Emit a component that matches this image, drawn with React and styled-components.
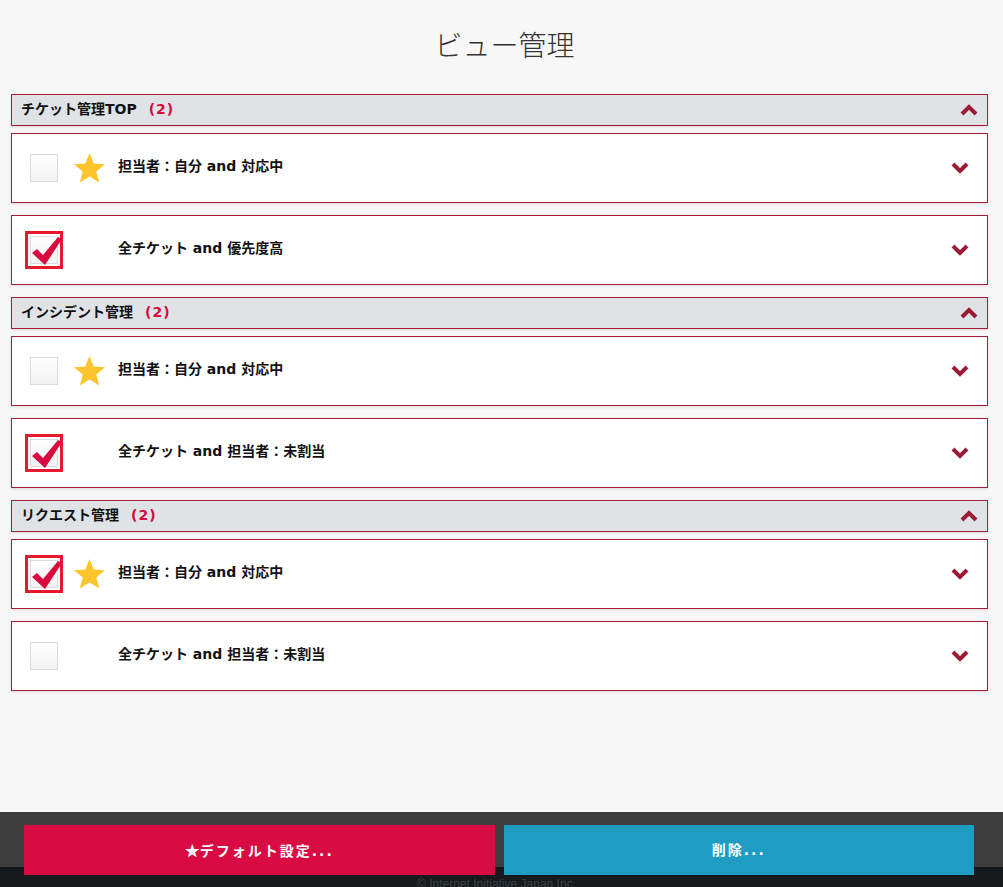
import React from 'react';
import styled, { createGlobalStyle } from 'styled-components';

const groups = [
  {
    title: 'チケット管理TOP',
    items: [
      { label: '担当者：自分 and 対応中', checked: false, star: true },
      { label: '全チケット and 優先度高', checked: true, star: false },
    ],
  },
  {
    title: 'インシデント管理',
    items: [
      { label: '担当者：自分 and 対応中', checked: false, star: true },
      { label: '全チケット and 担当者：未割当', checked: true, star: false },
    ],
  },
  {
    title: 'リクエスト管理',
    items: [
      { label: '担当者：自分 and 対応中', checked: true, star: true },
      { label: '全チケット and 担当者：未割当', checked: false, star: false },
    ],
  },
];

const Chevron = ({ up }) => (
  <svg width="18" height="12" viewBox="0 0 18 12">
    <polyline
      points={up ? '2,10 9,3 16,10' : '2,2 9,9 16,2'}
      fill="none"
      stroke="#9b1b35"
      strokeWidth="4"
      strokeLinejoin="miter"
    />
  </svg>
);

const Star = () => (
  <svg width="33" height="32" viewBox="0 0 33 32">
    <polygon
      points="16.5,1 20.7,11.6 32,12.2 23.3,19.5 26.2,30.6 16.5,24.4 6.8,30.6 9.7,19.5 1,12.2 12.3,11.6"
      fill="#fdc52b"
    />
  </svg>
);

const CheckMark = () => (
  <Tick width="32" height="30" viewBox="0 0 32 30">
    <polygon points="1,16 6,12 12,18 27,0 31,2 14,28" fill="#d9093f" />
  </Tick>
);

const App = () => (
  <>
    <GlobalStyle />
    <Page>
      <Main>
        <Title>ビュー管理</Title>
        {groups.map((group, gi) => (
          <Group key={gi}>
            <GroupHeader>
              <GroupTitle>{group.title}</GroupTitle>
              <Count>(2)</Count>
              <Spacer />
              <Chevron up />
            </GroupHeader>
            <ItemList>
              {group.items.map((item, ii) => (
                <Item key={ii}>
                  <Box checked={item.checked}>{item.checked && <CheckMark />}</Box>
                  <StarSlot>{item.star && <Star />}</StarSlot>
                  <Label>{item.label}</Label>
                  <Spacer />
                  <Chevron />
                </Item>
              ))}
            </ItemList>
          </Group>
        ))}
      </Main>
      <ActionBar>
        <Button color="#d90b43"><StarGlyph>★</StarGlyph>デフォルト設定...</Button>
        <Button color="#1e9cc1">削除...</Button>
      </ActionBar>
      <Copyright>© Internet Initiative Japan Inc.</Copyright>
    </Page>
  </>
);

export default App;

const GlobalStyle = createGlobalStyle`
  body {
    margin: 0;
    background: #f7f7f7;
    font-family: "DejaVu Sans", "Noto Sans CJK JP", sans-serif;
    color: #111;
  }
`;

const Page = styled.div`
  height: 100vh;
  display: flex;
  flex-direction: column;
  overflow: hidden;
`;

const Main = styled.div`
  flex: 1;
  padding: 0 15px 0 11px;
`;

const Title = styled.h1`
  margin: 0 0 30px;
  padding: 24px 0 0 10px;
  height: 40px;
  line-height: 40px;
  text-align: center;
  font-family: "Noto Sans CJK JP", sans-serif;
  font-size: 28px;
  font-weight: 300;
  color: #333;
`;

const Group = styled.div`
  margin-bottom: 12px;
`;

const GroupHeader = styled.div`
  height: 30px;
  display: flex;
  align-items: center;
  padding: 0 9px;
  background: #dfe3e6;
  border: 1px solid #a51d36;
  box-shadow: 0 1px 2px rgba(0, 0, 0, 0.12);
  margin-bottom: 7px;
`;

const GroupTitle = styled.span`
  font-size: 14px;
  line-height: 18px;
  font-weight: 700;
  transform: translateY(-1px);
`;

const Count = styled.span`
  margin-left: 12px;
  font-size: 14px;
  line-height: 18px;
  font-weight: 700;
  color: #d9093f;
  letter-spacing: 1px;
  transform: translateY(-1px);
`;

const Spacer = styled.div`
  flex: 1;
`;

const ItemList = styled.div`
  display: flex;
  flex-direction: column;
  gap: 12px;
`;

const Item = styled.div`
  height: 68px;
  display: flex;
  align-items: center;
  padding: 0 18px;
  background: #fff;
  border: 1px solid #a51d36;
  box-shadow: 0 1px 3px rgba(0, 0, 0, 0.12);
`;

const Box = styled.div`
  position: relative;
  width: 26px;
  height: 26px;
  border: 1px solid #dcdcdc;
  background: linear-gradient(#fff, #f2f2f2);
  outline: ${p => (p.checked ? '3px solid #e8192c' : 'none')};
  outline-offset: 2px;
`;

const Tick = styled.svg`
  position: absolute;
  left: 0;
  top: 0;
`;

const StarSlot = styled.div`
  width: 33px;
  height: 32px;
  margin-left: 15px;
`;

const Label = styled.span`
  margin-left: 12px;
  font-size: 14px;
  line-height: 18px;
  font-weight: 700;
  transform: translateY(-2px);
`;

const ActionBar = styled.div`
  position: relative;
  z-index: 1;
  height: 42px;
  padding: 13px 29px 0 24px;
  display: flex;
  gap: 9px;
  background: #3d3d3d;
`;

const Button = styled.button`
  flex: 1;
  height: 50px;
  padding: 0 0 2px;
  border: none;
  background: ${p => p.color};
  color: #fff;
  font-family: "DejaVu Sans", "Noto Sans CJK JP", sans-serif;
  font-size: 14px;
  font-weight: 700;
  letter-spacing: 2px;
  cursor: pointer;
`;

const StarGlyph = styled.span`
  font-family: "Noto Sans CJK JP", sans-serif;
  font-size: 15px;
  letter-spacing: 0;
`;

const Copyright = styled.div`
  height: 20px;
  padding-top: 9px;
  box-sizing: border-box;
  overflow: hidden;
  background: #161a1c;
  color: #3d4245;
  font-family: "Liberation Sans", sans-serif;
  font-size: 12px;
  line-height: 16px;
  text-align: center;
  padding-right: 10px;
`;
